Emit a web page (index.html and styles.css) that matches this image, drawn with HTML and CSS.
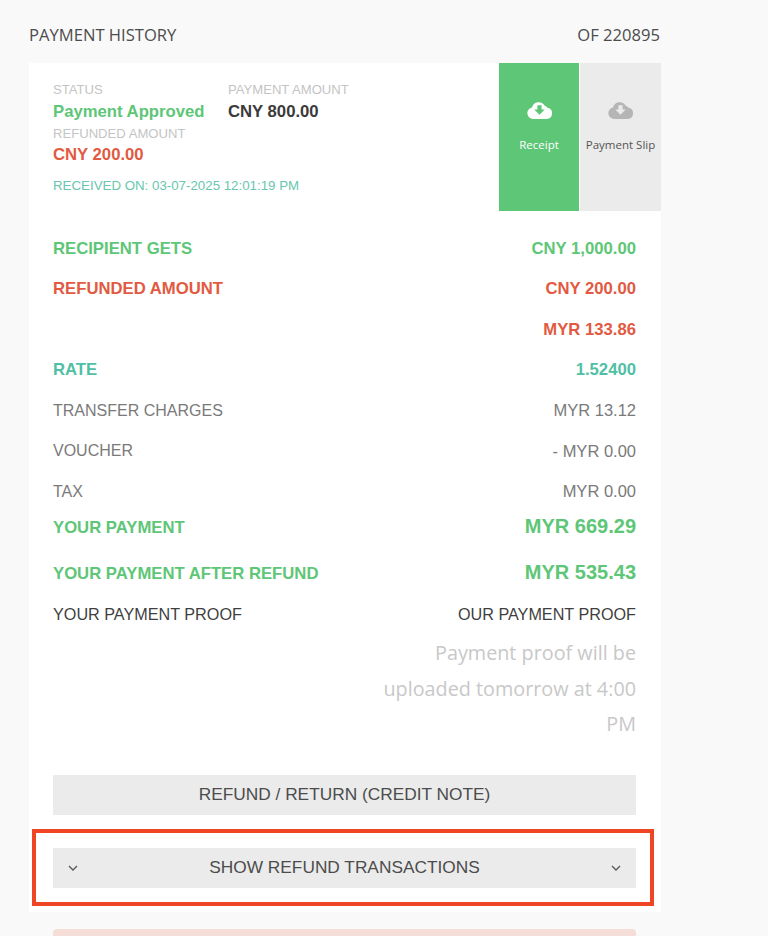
FILE: index.html
```html
<!DOCTYPE html>
<html lang="en">
<head>
<meta charset="utf-8">
<title>Payment History</title>
<link rel="stylesheet" href="styles.css">
</head>
<body>
<main class="page">
  <header class="top">
    <span>PAYMENT HISTORY</span>
    <span>OF 220895</span>
  </header>
  <section class="card">
    <div class="summary">
      <div class="info">
        <div class="info-cols">
          <div class="col-status">
            <div class="label">STATUS</div>
            <div class="value green">Payment Approved</div>
          </div>
          <div>
            <div class="label">PAYMENT AMOUNT</div>
            <div class="value dark">CNY 800.00</div>
          </div>
        </div>
        <div class="label">REFUNDED AMOUNT</div>
        <div class="value value-refund red">CNY 200.00</div>
        <div class="received">RECEIVED ON: 03-07-2025 12:01:19 PM</div>
      </div>
      <a class="tile tile-green">
        <svg class="cloud" viewBox="0 0 24 18"><path fill="currentColor" d="M6 18a5.5 5.5 0 0 1-1.2-10.9A6.6 6.6 0 0 1 17 5.4a3.6 3.6 0 0 1 2.6 1.9A5.4 5.4 0 0 1 19 18z"/><path class="arrow-green" d="M10 5h4v4h3l-5 5-5-5h3z"/></svg>
        <span>Receipt</span>
      </a>
      <a class="tile tile-grey">
        <svg class="cloud" viewBox="0 0 24 18"><path fill="currentColor" d="M6 18a5.5 5.5 0 0 1-1.2-10.9A6.6 6.6 0 0 1 17 5.4a3.6 3.6 0 0 1 2.6 1.9A5.4 5.4 0 0 1 19 18z"/><path class="arrow-grey" d="M10 5h4v4h3l-5 5-5-5h3z"/></svg>
        <span>Payment Slip</span>
      </a>
    </div>
    <div class="rows">
      <div class="row bold green"><span>RECIPIENT GETS</span><span>CNY 1,000.00</span></div>
      <div class="row bold red"><span>REFUNDED AMOUNT</span><span>CNY 200.00</span></div>
      <div class="row bold red"><span></span><span>MYR 133.86</span></div>
      <div class="row bold teal"><span>RATE</span><span>1.52400</span></div>
      <div class="row grey"><span>TRANSFER CHARGES</span><span class="num">MYR 13.12</span></div>
      <div class="row grey"><span>VOUCHER</span><span class="num">- MYR 0.00</span></div>
      <div class="row grey"><span>TAX</span><span class="num">MYR 0.00</span></div>
      <div class="row row-pay bold green"><span>YOUR PAYMENT</span><span class="big">MYR 669.29</span></div>
      <div class="row row-after bold green"><span>YOUR PAYMENT AFTER REFUND</span><span class="big">MYR 535.43</span></div>
      <div class="row row-proof"><span>YOUR PAYMENT PROOF</span><span>OUR PAYMENT PROOF</span></div>
    </div>
    <p class="proof-note">Payment proof will be uploaded tomorrow at 4:00 PM</p>
    <div class="actions">
      <button class="btn" type="button">REFUND / RETURN (CREDIT NOTE)</button>
      <button class="btn btn-toggle" type="button">
        <svg class="chev" viewBox="0 0 10 6"><path d="M1 1l4 4 4-4"/></svg>
        <span>SHOW REFUND TRANSACTIONS</span>
        <svg class="chev" viewBox="0 0 10 6"><path d="M1 1l4 4 4-4"/></svg>
      </button>
    </div>
    <div class="highlight"></div>
  </section>
  <div class="alert"></div>
</main>
</body>
</html>
```
FILE: styles.css
```css
* { box-sizing: border-box; }
html, body { margin: 0; height: 936px; overflow: hidden; }
body { background: #f9f9f9; font-family: "Liberation Sans", Arial, sans-serif; color: #444; }
.page { width: 632px; margin-left: 29px; }
.top { display: flex; justify-content: space-between; height: 63px; padding-top: 24px; font: 16.6px/22px "Open Sans", sans-serif; color: #4c4c4c; padding-right: 1px; }
.card { position: relative; background: #fff; height: 849px; }
.summary { display: flex; height: 148px; }
.info { flex: 1; padding: 19px 0 0 24px; }
.info-cols { display: flex; }
.col-status { width: 175px; }
.label { font-size: 13.1px; line-height: 15px; color: #c4c4c4; }
.value { font-size: 16.7px; line-height: 29px; font-weight: bold; }
.value-refund { line-height: 28px; }
.green { color: #5ec677; }
.red { color: #e25a41; }
.dark { color: #3a3a3a; }
.teal { color: #50bfa5; }
.grey { color: #7a7a7a; }
.received { margin-top: 9px; font-size: 13.3px; line-height: 15px; color: #68c6ae; }
.tile { width: 81px; display: flex; flex-direction: column; align-items: center; padding-top: 37px; font: 11.5px/15px "Open Sans", sans-serif; }
.tile-green { background: #5ec677; color: #fff; border-right: 1px solid #fff; }
.tile-grey { background: #ebebeb; color: #b5b5b5; }
.tile-grey span { color: #555; }
.cloud { width: 25px; height: 19px; margin-bottom: 18px; }
.arrow-green { fill: #5ec677; }
.arrow-grey { fill: #ebebeb; }
.rows { padding: 17.5px 25px 0 24px; }
.row { display: flex; justify-content: space-between; align-items: center; height: 40.5px; font-size: 16.7px; }
.bold { font-weight: bold; }
.row.grey { font-size: 16px; }
.num { font-size: 16.5px; }
.row-pay { height: 32px; }
.row-after { height: 60px; }
.big { font-size: 20px; margin-top: -3px; }
.row-proof { height: 20px; font-size: 16.2px; color: #3f3f3f; }
.proof-note { margin: 11px 25px 0 auto; width: 270px; text-align: right; font: 19.8px/35.5px "Open Sans", sans-serif; color: #c8c8c8; }
.actions { padding: 33px 25px 0 24px; display: flex; flex-direction: column; gap: 33px; }
.btn { display: flex; align-items: center; justify-content: center; width: 100%; height: 40px; border: 0; background: #ebebeb; color: #4c4c4c; font: 17.3px "Liberation Sans", Arial, sans-serif; }
.btn-toggle { justify-content: space-between; padding: 0 15px; }
.chev { width: 10px; height: 6px; fill: none; stroke: #555; stroke-width: 1.3; }
.highlight { position: absolute; left: 3px; top: 766px; width: 622px; height: 77px; border: 4px solid #f04525; pointer-events: none; }
.alert { margin: 17px 25px 0 24px; height: 40px; background: #f6ded8; border-radius: 4px; }
```
